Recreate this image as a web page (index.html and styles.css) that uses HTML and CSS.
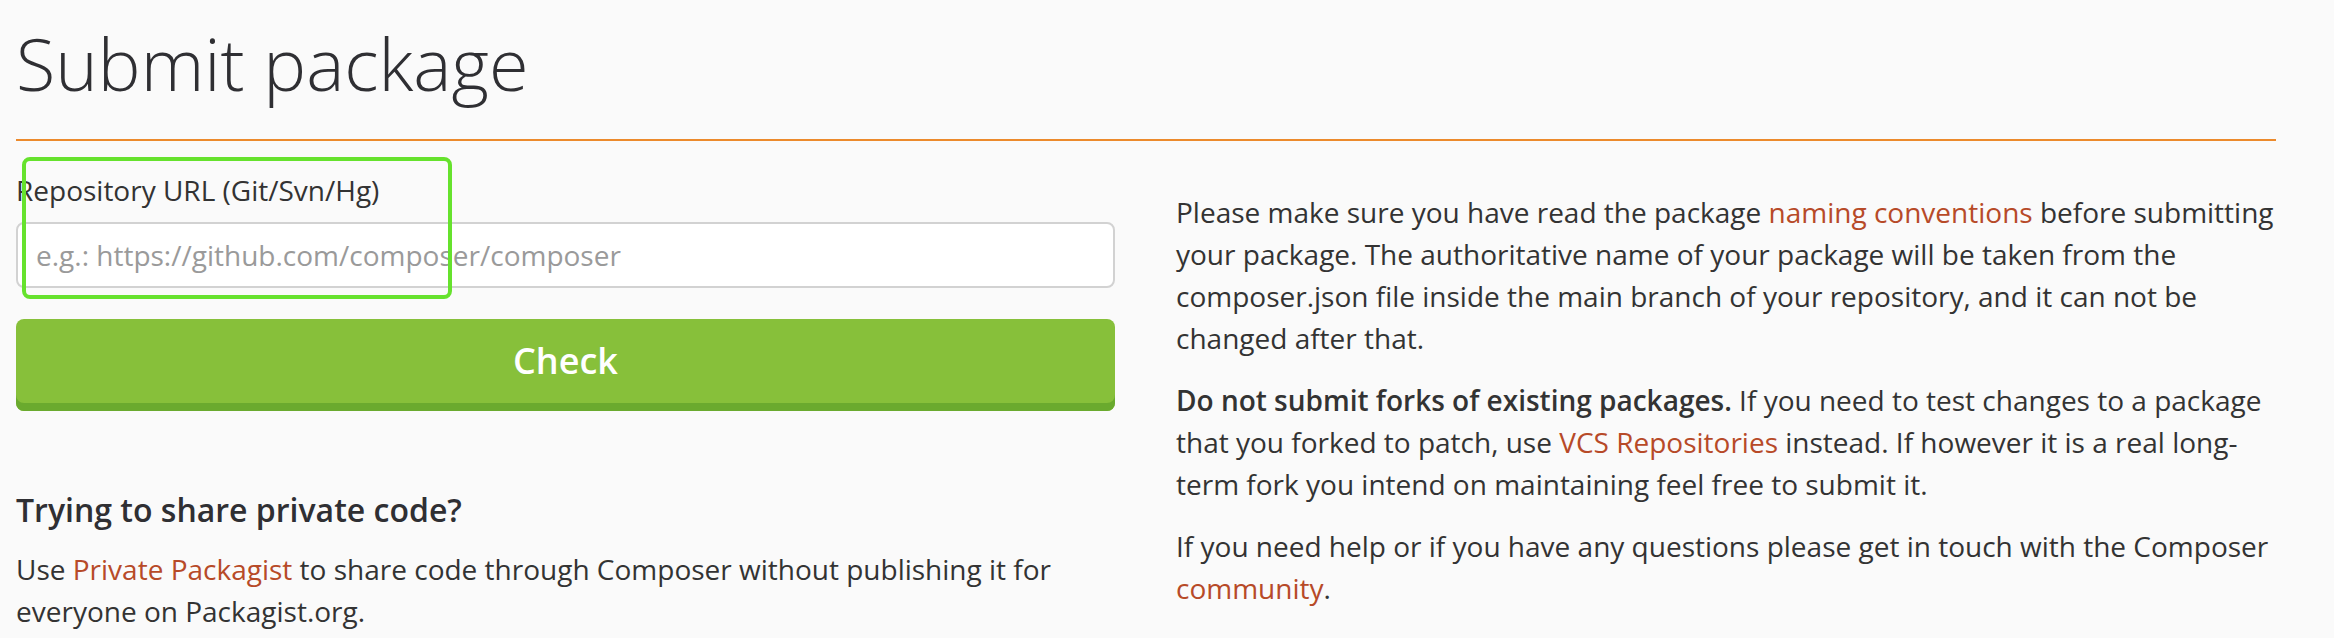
FILE: index.html
```html
<!DOCTYPE html>
<html lang="en">
<head>
<meta charset="utf-8">
<title>Submit package</title>
<link rel="stylesheet" href="styles.css">
</head>
<body>
<div class="container">
  <header class="page-head">
    <h1 class="title">Submit package</h1>
  </header>
  <div class="row">
    <div class="col col-left">
      <form class="submit-form">
        <label class="field-label" for="repo">Repository URL (Git/Svn/Hg)</label>
        <input class="field-input" id="repo" type="text" placeholder="e.g.: https://github.com/composer/composer">
        <button class="btn-check" type="button">Check</button>
      </form>
      <h2 class="sub-title">Trying to share private code?</h2>
      <p class="text">Use <a class="link" href="#">Private Packagist</a> to share code through Composer without publishing it for everyone on Packagist.org.</p>
    </div>
    <div class="col col-right">
      <p class="text">Please make sure you have read the package <a class="link" href="#">naming conventions</a> before submitting your package. The authoritative name of your package will be taken from the composer.json file inside the main branch of your repository, and it can not be changed after that.</p>
      <p class="text"><strong>Do not submit forks of existing packages.</strong> If you need to test changes to a package that you forked to patch, use <a class="link" href="#">VCS Repositories</a> instead. If however it is a real long-term fork you intend on maintaining feel free to submit it.</p>
      <p class="text">If you need help or if you have any questions please get in touch with the Composer <a class="link" href="#">community</a>.</p>
    </div>
  </div>
</div>
<div class="highlight"></div>
</body>
</html>
```

FILE: styles.css
```css
* { box-sizing: border-box; }

html, body {
  margin: 0;
  padding: 0;
  background: #fafafa;
}

body {
  font-family: "Open Sans", "Noto Sans", sans-serif;
  font-size: 28px;
  line-height: 42px;
  color: #333333;
  position: relative;
  height: 638px;
  overflow: hidden;
}

.container {
  padding: 0 58px 0 16px;
}

.page-head {
  padding-top: 24px;
  padding-bottom: 36px;
  border-bottom: 2px solid #ec8a2c;
}

.title {
  margin: 0;
  font-size: 72px;
  line-height: 79px;
  font-weight: 300;
  color: #2f2f33;
}

.row {
  display: grid;
  grid-template-columns: 1099px 1fr;
  column-gap: 61px;
}

.col-left {
  padding-top: 28px;
}

.col-right {
  padding-top: 50px;
}

.submit-form {
  display: flex;
  flex-direction: column;
}

.field-label {
  display: block;
  margin-bottom: 11px;
  color: #333333;
}

.field-input {
  height: 66px;
  width: 100%;
  border: 2px solid #d2d2d2;
  border-radius: 8px;
  background: #ffffff;
  padding: 0 18px;
  font-family: inherit;
  font-size: 28px;
  color: #333333;
  outline: none;
}

.field-input::placeholder {
  color: #9a9a9a;
}

.btn-check {
  margin-top: 31px;
  height: 92px;
  width: 100%;
  border: none;
  border-radius: 8px;
  background: #87c03a;
  box-shadow: inset 0 -8px 0 #6aaa2e;
  padding: 0 0 8px 0;
  font-family: inherit;
  font-size: 36px;
  font-weight: 600;
  line-height: 84px;
  color: #ffffff;
  cursor: pointer;
}

.sub-title {
  margin: 82px 0 22px;
  font-size: 32px;
  line-height: 33px;
  font-weight: 600;
  color: #2f2f33;
}

.text {
  margin: 0 0 20px;
}

.text strong {
  font-weight: 600;
}

.link {
  color: #b74a28;
  text-decoration: none;
}

.highlight {
  position: absolute;
  left: 22px;
  top: 157px;
  width: 430px;
  height: 142px;
  border: 4px solid #66e22d;
  border-radius: 8px;
  pointer-events: none;
}
```
